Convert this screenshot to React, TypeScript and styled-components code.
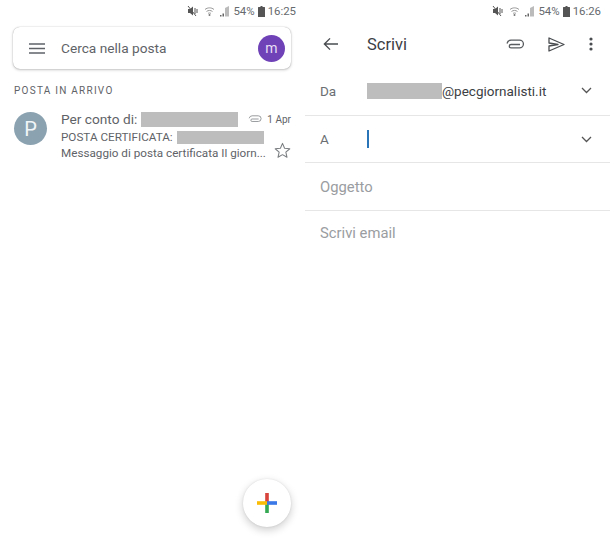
import React from "react";
import styled, { createGlobalStyle } from "styled-components";

const Global = createGlobalStyle`
  html, body { margin: 0; padding: 0; background: #fff; }
  body { font-family: Roboto, "Liberation Sans", sans-serif; width: 610px; height: 540px; overflow: hidden; }
`;

const Screen = styled.div`
  display: grid;
  grid-template-columns: 305px 305px;
  width: 610px;
  height: 540px;
`;

const Panel = styled.section`
  position: relative;
  height: 540px;
  display: flex;
  flex-direction: column;
  min-width: 0;
`;

const StatusBar = styled.div`
  height: 22px;
  display: flex;
  align-items: center;
  justify-content: flex-end;
  padding-right: 9px;
  color: #666a6e;
  font-size: 11.400px;
  gap: 1px;
  box-sizing: border-box;
`;

const StatusIcons = styled.svg`
  margin-right: 1px;
`;

const StatusBattery = styled.svg`
  margin: 0 2px;
`;

const Status = ({ time }: { time: string }) => (
  <StatusBar>
    <StatusIcons width="44" height="12" viewBox="0 0 44 12">
      <g fill="#555">
        <path d="M1 4h2l3-2.500v9L3 8H1z" />
        <path d="M8 3v6M10 4v4" stroke="#555" strokeWidth="1" />
        <path d="M1 1l8 10" stroke="#555" strokeWidth="1" />
      </g>
      <path d="M18 4.500c2.500-2.200 6.500-2.200 9 0M19.500 6.500c1.700-1.400 4.300-1.400 6 0M21 8.500c.9-.7 2.100-.7 3 0" fill="none" stroke="#999" strokeWidth="1" />
      <circle cx="22.500" cy="10" r="1" fill="#777" />
      <path d="M33 10h1.500v1.500H33zM35.500 8.500H37v3h-1.500z" fill="#666" />
      <path d="M38 11.500V3l4-2v10.500z" fill="#bbb" />
    </StatusIcons>
    <span>54%</span>
    <StatusBattery width="7" height="11" viewBox="0 0 7 11">
      <path d="M2.500 0h2v1H6.500a.5.5 0 0 1 .5.5V11H0V1.500A.5.5 0 0 1 .5 1h2z" fill="#555" />
    </StatusBattery>
    <span>{time}</span>
  </StatusBar>
);

const PaperClip = ({ w, h, color, sw }: { w: number; h: number; color: string; sw: number }) => (
  <svg width={w} height={h} viewBox="0 0 18 11">
    <path d="M14 5.500H5a1.700 1.700 0 0 0 0 3.400h8.500a3.900 3.900 0 0 0 0-7.800H5a4.400 4.400 0 0 0-4 3.400" fill="none" stroke={color} strokeWidth={sw} />
  </svg>
);

/* Left panel: inbox */
const SearchCard = styled.div`
  margin: 5px 14px 0 13px;
  height: 42px;
  border-radius: 7px;
  background: #fff;
  box-shadow: 0 0 1px rgba(0,0,0,.35), 0 1px 3px rgba(0,0,0,.22);
  display: flex;
  align-items: center;
  padding: 0 6px 0 16px;
`;

const SearchText = styled.span`
  flex: 1;
  margin-left: 16px;
  font-size: 13.700px;
  color: #5f6368;
`;

const Monogram = styled.div`
  width: 27px;
  height: 27px;
  border-radius: 50%;
  background: #6f42b8;
  color: #e8def5;
  display: flex;
  align-items: center;
  justify-content: center;
  font-size: 14px;
`;

const SectionLabel = styled.div`
  margin: 15px 0 0 14px;
  font-size: 10px;
  line-height: 13px;
  letter-spacing: 1.250px;
  color: #5f6368;
`;

const MailRow = styled.div`
  display: flex;
  margin: 11px 0 0 14px;
  padding-right: 14px;
`;

const Avatar = styled.div`
  flex: none;
  width: 33px;
  height: 33px;
  margin-top: 4px;
  border-radius: 50%;
  background: #8ba3b1;
  color: #f1f5f7;
  display: flex;
  align-items: center;
  justify-content: center;
  font-size: 20px;
`;

const MailBody = styled.div`
  flex: 1;
  margin-left: 14px;
  padding-top: 2px;
  min-width: 0;
`;

const MailLine = styled.div`
  display: flex;
  align-items: center;
  white-space: nowrap;
  color: #5f6368;
`;

const SenderLine = styled(MailLine)`
  height: 18px;
  font-size: 13.700px;
`;

const SubjectLine = styled(MailLine)`
  height: 16px;
  margin-top: 1px;
  font-size: 11.700px;
`;

const SnippetLine = styled(MailLine)`
  height: 15px;
  font-size: 11.700px;
  justify-content: space-between;
`;

const StarIcon = styled.svg`
  flex: none;
  margin-bottom: 5px;
`;

const Redacted = styled.span<{ $w: number; $h: number; $ml?: number }>`
  display: inline-block;
  flex: none;
  width: ${p => p.$w}px;
  height: ${p => p.$h}px;
  margin-left: ${p => p.$ml ?? 0}px;
  background: #bdbdbd;
`;

const DateText = styled.span`
  margin-left: 5px;
  font-size: 10px;
  color: #5f6368;
`;

const ClipSlot = styled.span`
  display: flex;
  margin-left: 10px;
`;

const Fab = styled.div`
  position: absolute;
  left: 243px;
  top: 479px;
  width: 48px;
  height: 48px;
  border-radius: 50%;
  background: #fff;
  box-shadow: 0 3px 8px rgba(0,0,0,.2), 0 0 2px rgba(0,0,0,.1);
  display: flex;
  align-items: center;
  justify-content: center;
`;

/* Right panel: compose */
const Toolbar = styled.div`
  height: 44px;
  display: flex;
  align-items: center;
  padding: 0 17px 0 18px;
`;

const Title = styled.h1`
  flex: 1;
  margin: 0 0 0 29px;
  font-size: 16.500px;
  font-weight: 400;
  color: #3c4043;
`;

const ToolIcons = styled.div`
  display: flex;
  align-items: center;
  gap: 24px;
`;

const Field = styled.div<{ $h: number; $line?: boolean }>`
  height: ${p => p.$h}px;
  box-sizing: border-box;
  display: flex;
  align-items: center;
  padding: 0 18px 0 15px;
  border-bottom: ${p => (p.$line ? "1px solid #e6e6e6" : "none")};
`;

const BodyField = styled(Field)`
  padding-bottom: 2px;
`;

const FieldLabel = styled.span`
  width: 47px;
  flex: none;
  font-size: 13.500px;
  color: #6b6f73;
`;

const FromValue = styled.div`
  flex: 1;
  display: flex;
  align-items: center;
  font-size: 13.500px;
  color: #3c4043;
`;

const Caret = styled.span`
  width: 2px;
  height: 18px;
  background: #2a74b8;
`;

const Spacer = styled.div`
  flex: 1;
`;

const Placeholder = styled.span`
  font-size: 14.800px;
  color: #9a9da1;
`;

const Chevron = () => (
  <svg width="11" height="7" viewBox="0 0 11 7">
    <path d="M1 1l4.500 4.500L10 1" fill="none" stroke="#555" strokeWidth="1.300" />
  </svg>
);

export default function App() {
  return (
    <>
      <Global />
      <Screen>
        <Panel>
          <Status time="16:25" />
          <SearchCard>
            <svg width="16" height="11" viewBox="0 0 16 11">
              <path d="M0 1h16M0 5.500h16M0 10h16" stroke="#5f6368" strokeWidth="1.400" />
            </svg>
            <SearchText>Cerca nella posta</SearchText>
            <Monogram>m</Monogram>
          </SearchCard>
          <SectionLabel>POSTA IN ARRIVO</SectionLabel>
          <MailRow>
            <Avatar>P</Avatar>
            <MailBody>
              <SenderLine>
                Per conto di:
                <Redacted $w={97} $h={15} $ml={4} />
                <ClipSlot>
                  <PaperClip w={14} h={8} color="#8a8d90" sw={1.200} />
                </ClipSlot>
                <DateText>1 Apr</DateText>
              </SenderLine>
              <SubjectLine>
                POSTA CERTIFICATA:
                <Redacted $w={87} $h={13} $ml={4} />
              </SubjectLine>
              <SnippetLine>
                Messaggio di posta certificata Il giorn...
                <StarIcon width="17" height="16" viewBox="0 0 24 23">
                  <path d="M12 2l3 7 7.500.7-5.700 5 1.700 7.300L12 18.200 5.500 22l1.700-7.300-5.700-5L9 9z" fill="none" stroke="#7a7d80" strokeWidth="1.500" strokeLinejoin="round" />
                </StarIcon>
              </SnippetLine>
            </MailBody>
          </MailRow>
          <Fab>
            <svg width="20" height="20" viewBox="0 0 20 20">
              <rect x="8.200" y="0" width="3.600" height="10" fill="#d8433b" />
              <rect x="8.200" y="10" width="3.600" height="10" fill="#34a853" />
              <rect x="0" y="8.200" width="10" height="3.600" fill="#fbbc05" />
              <rect x="10" y="8.200" width="10" height="3.600" fill="#3b78e7" />
            </svg>
          </Fab>
        </Panel>

        <Panel>
          <Status time="16:26" />
          <Toolbar>
            <svg width="15" height="14" viewBox="0 0 16 14">
              <path d="M7.500 1L1.500 7l6 6M1.500 7H16" fill="none" stroke="#4a4d50" strokeWidth="1.500" />
            </svg>
            <Title>Scrivi</Title>
            <ToolIcons>
              <PaperClip w={18} h={11} color="#5a5d60" sw={1.300} />
              <svg width="17" height="15" viewBox="0 0 17 15">
                <path d="M1 1l15 6.500L1 14V9l9-1.500L1 6z" fill="none" stroke="#4a4d50" strokeWidth="1.300" strokeLinejoin="round" />
              </svg>
              <svg width="4" height="14" viewBox="0 0 4 14">
                <circle cx="2" cy="2" r="1.600" fill="#4a4d50" />
                <circle cx="2" cy="7" r="1.600" fill="#4a4d50" />
                <circle cx="2" cy="12" r="1.600" fill="#4a4d50" />
              </svg>
            </ToolIcons>
          </Toolbar>
          <Field $h={50} $line>
            <FieldLabel>Da</FieldLabel>
            <FromValue>
              <Redacted $w={75} $h={16} />
              @pecgiornalisti.it
            </FromValue>
            <Chevron />
          </Field>
          <Field $h={47} $line>
            <FieldLabel>A</FieldLabel>
            <Caret />
            <Spacer />
            <Chevron />
          </Field>
          <Field $h={48} $line>
            <Placeholder>Oggetto</Placeholder>
          </Field>
          <BodyField $h={46}>
            <Placeholder>Scrivi email</Placeholder>
          </BodyField>
        </Panel>
      </Screen>
    </>
  );
}
